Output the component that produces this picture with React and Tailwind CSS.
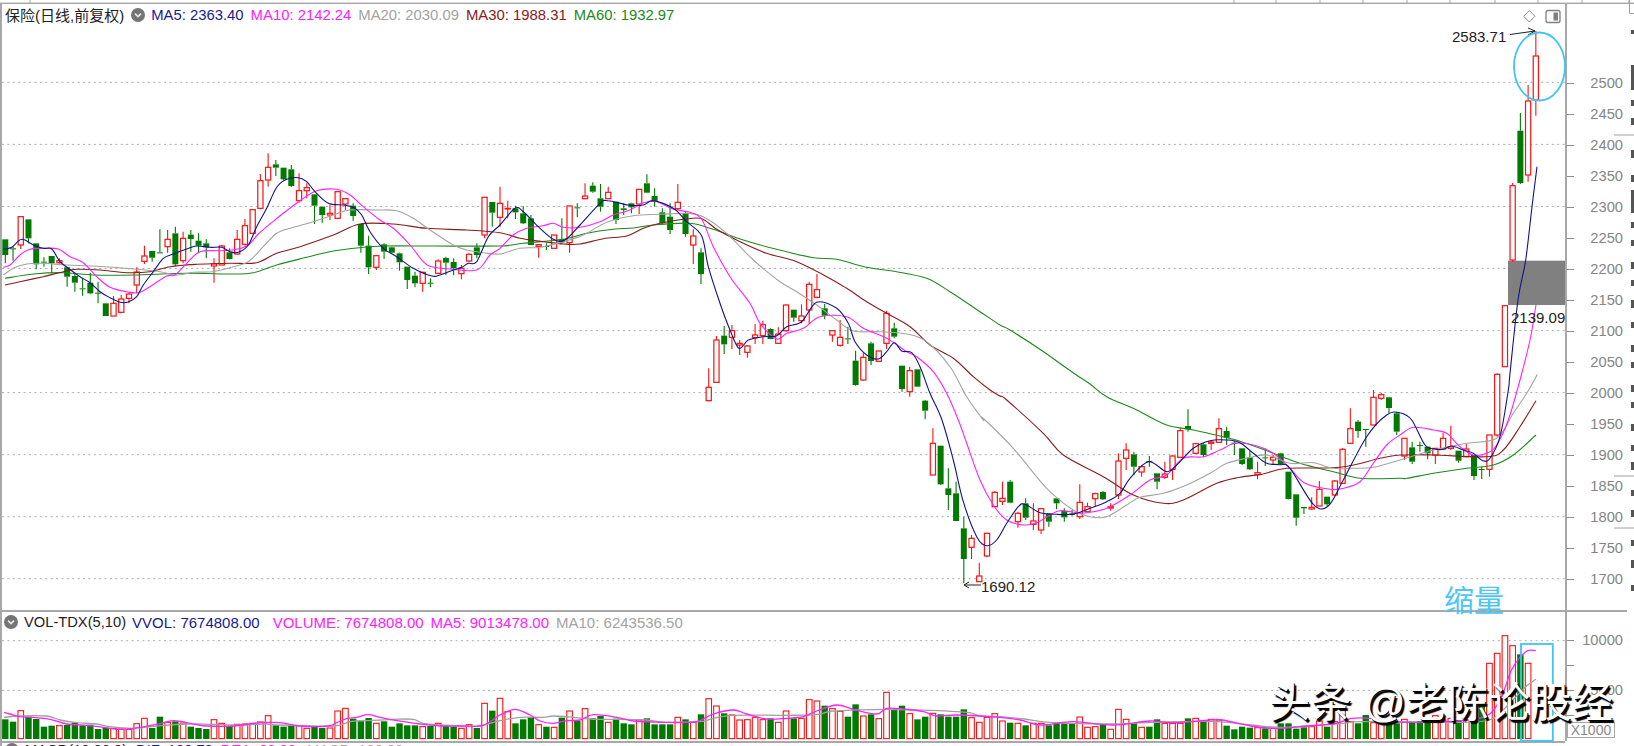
import React from 'react';

// K line rows: [colour, body top, body bottom, high, low], read off crops at 3x
const toReal = (oy, rows) => rows.map(([c, a, b, h, l]) => [c, oy + a / 3, oy + b / 3, oy + h / 3, oy + l / 3]);

const CANDLES = [
  ...toReal(150, [
    ['g',268,315,268,340],['g',295,297,290,332],['r',200,285,200,297],['g',208,265,208,280],['g',280,343,280,358],
    ['g',335,338,322,350],['g',318,340,318,370],['r',332,338,325,345],['g',352,380,352,410],['g',378,398,370,425],
    ['g',415,417,385,437],['g',398,430,368,433],['g',428,430,395,460],['g',460,498,460,498],['r',460,498,438,498],
    ['r',447,487,435,490],['r',432,445,430,460],['r',366,405,352,430],['r',318,334,287,342],['g',303,323,303,335],
    ['g',307,310,238,310],['r',268,290,240,308],['g',250,343,230,348],['r',265,332,245,340],['g',254,267,240,305],
    ['g',272,287,250,310],['g',280,292,268,325],['r',342,348,325,398],['r',288,345,285,345],['g',307,327,295,328],
    ['r',268,312,240,315],['r',227,283,207,287],['r',179,250,178,252],['r',92,175,72,178],['r',52,90,10,110],
    ['g',43,53,30,78],['g',53,88,53,90],['g',58,108,45,110],['r',122,152,70,158],['r',113,122,100,145],
    ['g',133,167,133,222],['g',170,195,170,218],['r',190,195,165,210],['r',125,205,123,207],['r',146,162,145,180],
    ['g',167,198,160,212],['g',222,287,222,308],['g',287,352,257,372],['r',317,352,315,360],['g',283,305,280,327],
    ['g',292,308,290,310],['g',310,337,308,362],['g',350,390,350,417],['g',377,400,365,412],['r',367,400,365,425],
    ['g',398,400,385,412],['r',333,370,328,372],['g',324,338,320,375],['g',336,355,325,376],['r',355,371,345,388],
    ['r',313,333,310,337],['g',292,315,280,325],['r',142,255,142,265],['g',156,188,156,230],['r',160,202,110,230],
  ]),
  ...toReal(160, [
    ['r',145,147,122,175],['g',145,157,137,177],['g',160,190,138,192],['g',175,255,165,255],['r',254,259,252,293],
    ['g',258,260,250,270],['r',225,265,225,265],['g',237,247,175,250],['r',138,248,138,278],['g',142,145,130,172],
    ['r',108,116,70,118],['g',77,95,67,98],['g',115,140,72,155],['r',97,116,80,118],['g',125,180,125,192],
    ['g',145,150,130,165],['g',130,142,128,160],['r',88,132,88,162],['g',70,98,43,100],['g',108,125,85,140],
    ['g',157,190,145,195],['g',170,210,130,222],['r',127,146,72,150],['g',160,222,155,230],['r',228,255,208,312],
    ['g',277,342,265,372],['r',682,722,625,724],['r',540,667,528,668],['g',527,553,498,582],['r',512,532,495,567],
    ['r',550,555,540,585],['r',558,577,555,593],['r',525,533,492,552],['r',494,527,482,552],['g',507,537,505,538],
    ['r',522,550,502,552],['r',435,512,433,515],['g',449,473,449,485],['r',468,482,433,490],['r',373,450,365,492],
    ['r',389,412,342,415],['g',445,467,432,478],['r',512,525,510,545],['r',532,556,480,560],['g',535,538,500,552],
    ['g',602,675,572,677],['r',592,660,580,662],['g',550,603,545,615],['r',573,604,572,605],['r',460,550,452,567],
    ['g',505,530,488,535],['g',617,687,617,695],['r',632,695,620,710],['g',628,680,628,680],['g',722,752,720,778],
  ]),
  ...toReal(380, [
    ['r',190,285,145,285],['g',197,313,197,315],['g',325,345,265,390],['g',340,423,305,423],['g',445,537,410,610],
    ['r',475,502,465,537],['r',588,605,548,605],['r',460,528,458,532],['r',337,380,333,382],['r',355,364,305,375],
    ['g',305,368,300,370],['r',400,425,395,443],['g',370,413,355,420],['r',423,433,370,450],['r',386,450,385,462],
    ['g',400,425,400,440],['g',355,370,355,388],['g',393,412,385,425],['g',400,405,390,407],['r',367,410,313,417],
    ['r',380,395,368,398],['r',341,356,338,380],['g',336,358,333,360],['r',380,384,370,392],['r',243,345,220,357],
    ['r',210,235,190,270],['g',223,260,215,285],['r',260,276,255,290],['g',243,245,228,260],['g',280,305,280,328],
    ['r',282,292,245,297],['r',228,268,226,300],['r',152,232,143,235],['g',138,148,88,155],['r',191,220,188,222],
    ['g',193,225,190,232],['r',186,190,183,210],['r',146,187,115,188],['g',153,173,140,195],['g',188,190,182,225],
    ['g',205,252,205,255],['g',232,268,214,270],['r',278,284,245,298],['g',232,235,205,258],['r',232,240,225,255],
    ['g',220,252,218,255],['g',275,357,275,358],['g',343,413,343,437],['g',381,385,381,402],['r',382,387,352,390],
    ['r',328,378,303,378],['g',350,373,350,378],['r',303,345,300,347],['r',208,310,205,312],['r',146,190,85,192],
    ['g',125,153,120,173],['g',147,149,147,200],['r',52,135,30,135],['r',44,55,38,60],['g',52,84,50,100],
    ['g',100,155,95,165],
  ]),
  ...toReal(340, [
    ['r',295,348,295,360],['g',322,365,305,372],['g',315,317,305,335],['g',320,340,320,358],['r',325,345,325,372],
    ['r',295,327,278,330],['r',320,325,257,330],['g',332,362,332,368],['r',327,350,312,352],['g',345,408,345,420],
    ['g',387,390,380,417],['r',285,388,285,410],['r',103,285,100,290],
  ]),
  ['r',305.7,366.7,305,367],['r',185.7,260,183,262],['g',130.7,183,113,184],['r',101,175,85,181.7],['r',56,100,30.7,115.7],
];

const candleX = (i) => 5.3 + 7.73 * i;

// volume bar tops in page pixels
const VOLUMES = [
  ...[358,365,332,350,357,380,377,377,375,368,376,374,387,383,385,387,388,371,355,384,350,367,364,369,380,384,387,359,370,378,373,372,370,366,347,376,380,376,377,385,380,384,384,333,325,356,362,354,370,364,380,370,376,376,380,378,370,378,380,385,374,384,310,332].map((v) => 600 + v / 3),
  ...[175,215,250,238,232,254,260,262,233,213,243,206,235,228,247,236,250,253,240,235,253,253,253,232,238,247,223,176,198,220,225,240,239,232,239,235,247,213,235,235,179,183,197,206,214,230,193,228,223,236,157,210,197,221,238,230,220,223,230,230,208,233,247,232,221].map((v) => 640 + v / 3),
  ...[303,308,310,316,310,310,316,308,310,310,291,322,320,312,328,268,298,310,322,320,298,310,310,310,295,295,305,298,300,317,328,320,323,323,325,325,310,310,326,322,320,303,320,305,265,305,310,285,308,305,310,310,298,305,303,308,287,300,295,300,300,305,248,130,100,47,77,103,130].map((v) => 620 + v / 3),
];

const seg = (ox, oy, pts, sx = 3, sy = 3) => {
  const out = [];
  for (let i = 0; i < pts.length; i += 2) out.push([ox + pts[i] / sx, oy + pts[i + 1] / sy]);
  return out;
};

// crops overlap, keep only points that move on to the right, then round the corners
const line = (...parts) => {
  const p = [];
  parts.flat().forEach((q) => {
    if (!p.length || q[0] > p[p.length - 1][0]) p.push(q);
  });
  let d = `M${p[0][0].toFixed(1)} ${p[0][1].toFixed(1)}`;
  for (let i = 0; i < p.length - 1; i++) {
    const a = p[i - 1] || p[i];
    const b = p[i];
    const c = p[i + 1];
    const e = p[i + 2] || c;
    const c1 = [b[0] + (c[0] - a[0]) / 6, b[1] + (c[1] - a[1]) / 6];
    const c2 = [c[0] - (e[0] - b[0]) / 6, c[1] - (e[1] - b[1]) / 6];
    d += `C${c1[0].toFixed(1)} ${c1[1].toFixed(1)} ${c2[0].toFixed(1)} ${c2[1].toFixed(1)} ${c[0].toFixed(1)} ${c[1].toFixed(1)}`;
  }
  return d;
};

const MA5 = line(
  seg(0, 150, [10,298,35,292,65,268,100,285,130,295,155,297,180,335,205,355,240,380,270,398,300,425,330,443,360,457,385,456,410,440,430,405,460,365,490,325,520,312,560,297,590,288,630,292,665,292,690,305,715,307,745,285,770,230,800,175,830,112,860,88,895,83,920,95,945,125,985,160,1030,165,1060,172,1085,195,1110,245,1150,295,1190,320,1240,355,1295,378,1320,375,1360,360,1385,352,1405,340,1430,335,1465,260,1500,225]),
  seg(500, 160, [0,195,45,145,70,155,115,200,160,238,195,240,240,195,300,130,325,122,385,135,430,135,460,122,520,145,560,185,605,228,625,320,660,430,690,510,717,565,745,540,790,530,830,527,860,500,905,485,950,427,1010,445,1045,490,1065,545,1100,585,1135,597,1160,575,1183,548,1205,573,1235,578,1260,620,1290,700,1325,778]),
  seg(900, 380, [115,90,160,240,190,365,230,470,260,497,290,480,320,430,355,380,375,373,420,398,470,403,520,402,570,385,620,365,660,340,690,295,745,245,800,275,830,255,880,205,930,182,980,180,1020,188,1060,220,1100,250,1140,254,1170,265,1240,373,1285,378,1330,300,1400,170,1460,105,1500,98]),
  seg(1300, 340, [335,240,375,315,405,327,430,328,455,318,490,330,520,340,548,362,570,355,600,290,625,150,630,100]),
  [[1518,300],[1525.7,260],[1532,206.7],[1537,166.7]],
);
const MA10 = line(
  seg(0, 150, [10,352,30,345,60,315,90,298,130,295,175,297,210,320,250,338,290,380,330,412,380,425,415,428,450,410,500,378,525,375,560,340,600,305,660,302,710,298,745,285,775,252,810,222,850,190,900,152,950,122,1010,118,1050,135,1090,170,1140,210,1180,235,1230,285,1270,335,1295,350,1350,357,1430,360,1470,315,1500,295]),
  seg(500, 160, [0,262,40,225,80,205,130,197,160,190,190,202,240,202,300,185,340,165,390,150,430,128,470,125,520,148,570,157,605,178,640,260,690,350,750,430,780,490,830,537,860,520,910,505,960,470,1040,470,1090,505,1160,535,1220,575,1250,590,1300,635,1340,700,1375,780]),
  seg(900, 380, [170,100,200,190,240,300,280,375,320,420,370,435,410,428,450,405,480,392,530,398,560,398,620,385,690,345,750,300,800,285,850,235,910,230,960,210,1005,190,1060,195,1120,220,1170,265,1215,310,1290,328,1330,325,1380,305,1420,250,1460,195,1500,165]),
  seg(1300, 340, [340,262,400,270,440,280,480,320,520,345,560,340,590,315,625,240,660,120,690,0]),
  [[1536,305]],
);
const MA20 = line(
  seg(0, 150, [10,375,40,355,80,342,130,340,200,345,280,348,340,352,410,358,480,365,530,375,580,367,640,365,700,350,745,335,790,290,830,250,880,232,940,215,1000,195,1050,180,1130,180,1190,182,1240,205,1290,240,1360,285,1400,300,1450,308,1500,312]),
  seg(500, 160, [0,282,60,265,120,262,190,245,250,225,320,187,400,167,480,163,560,160,610,170,680,220,760,300,840,365,890,395,950,435,1010,480,1060,513,1140,515,1220,522,1280,545,1350,620,1400,710,1450,780]),
  seg(900, 380, [250,115,340,205,440,325,520,390,570,410,620,410,680,375,720,352,790,340,860,315,930,280,980,250,1040,235,1100,225,1170,250,1240,248,1300,265,1360,265,1420,262,1500,240]),
  seg(1300, 340, [400,330,500,310,590,295,640,220,680,160,712,103]),
);
const MA30 = line(
  seg(0, 150, [15,405,60,395,130,380,190,365,230,358,300,360,380,368,450,365,510,350,590,343,690,340,770,338,830,310,900,290,1000,255,1080,222,1180,222,1280,235,1400,240,1500,248]),
  seg(500, 160, [60,235,130,245,190,252,240,252,310,236,380,228,430,205,480,190,550,178,605,176,650,208,720,245,800,280,890,305,980,350,1040,385,1100,425,1160,460,1230,500,1290,555,1360,595,1420,650,1470,690,1500,708]),
  seg(900, 380, [320,60,430,160,490,225,610,290,700,345,790,370,850,360,950,310,1020,292,1090,282,1160,265,1320,262,1440,235,1500,225]),
  seg(1300, 340, [400,345,560,350,610,330,660,260,708,182]),
);
const MA60 = line(
  seg(0, 150, [15,385,100,372,190,368,280,375,400,375,560,370,700,372,760,368,830,345,920,322,1000,303,1080,293,1150,288,1300,288,1500,288]),
  seg(500, 160, [70,250,190,238,260,220,340,208,400,204,460,195,570,190,640,208,730,240,830,268,940,293,1010,298,1100,322,1190,335,1280,355,1350,395,1440,455,1500,495]),
  [[1010,330],[1041,350],[1072,372],[1090,384]],
  seg(900, 380, [620,50,710,90,800,135,880,150,1000,178,1080,205,1200,250,1300,275,1380,295,1500,295]),
  seg(1300, 340, [320,415,400,400,500,385,580,375,640,345,708,285]),
);

const VOL_PINK = line(
  seg(0, 600, [12,337,30,342,60,350,100,352,150,358,200,372,260,376,310,382,360,388,400,385,470,373,520,362,570,370,620,378,700,378,780,368,840,368,900,378,985,378,1010,368,1040,356,1070,352,1105,344,1140,352,1190,362,1260,372,1320,378,1380,378,1440,378,1470,365,1500,345]),
  seg(500, 640, [45,208,90,225,120,243,160,250,200,242,240,240,280,224,350,232,400,243,460,246,520,247,590,245,640,222,700,210,740,222,800,237,860,235,910,230,950,213,1010,195,1060,208,1130,222,1160,205,1210,207,1270,215,1310,228,1370,225,1500,232]),
  seg(1000, 620, [50,300,100,315,180,305,280,315,370,303,430,308,520,300,550,300,620,318,680,325,760,318,830,310,870,295,920,295,960,305,1100,305,1200,290,1240,230,1265,150,1300,95,1325,92], 2.473),
);
const VOL_GREY = line(
  seg(0, 600, [12,352,60,348,140,348,180,360,230,368,290,372,330,380,400,385,470,378,560,372,640,373,720,375,800,372,840,375,1000,378,1050,365,1100,362,1180,358,1240,358,1280,372,1400,378,1440,378,1500,362]),
  seg(500, 640, [60,232,130,232,160,228,220,232,280,238,360,238,440,240,500,247,600,245,640,235,700,226,850,226,950,224,1000,213,1150,208,1250,210,1400,217,1440,228,1500,230]),
  seg(1000, 620, [60,297,130,308,280,312,400,306,540,305,620,315,700,322,830,312,900,305,1100,307,1210,300,1260,250,1300,200,1325,178], 2.473),
);

const GRID_PRICE = [82.3, 144.4, 206.5, 268.5, 330.6, 392.6, 454.7, 516.7, 578.7];
const PRICE_LABELS = ['2500','2450','2400','2350','2300','2250','2200','2150','2100','2050','2000','1950','1900','1850','1800','1750','1700'];
const RULER_TICKS = [30, 1234, 1276, 1320, 1363, 1407, 1450, 1495, 1538, 1582, 1629];
const EDGE_MARKS = [[30,4],[65,25],[100,6],[118,7],[150,8],[175,7],[190,23],[222,6],[240,6],[262,7],[280,6],[300,8],[322,6],[345,7],[362,6],[385,7],[402,6],[424,7],[445,6],[462,8],[490,6],[510,7],[540,6],[560,8],[585,6]];

const UP = '#ff1010';
const DOWN = '#007a00';

const Dropdown = () => (
  <svg width="14" height="14" viewBox="0 0 14 14" className="shrink-0">
    <circle cx="7" cy="7" r="7" fill="#757575" />
    <path d="M4 5.6 7 8.6 10 5.6" fill="none" stroke="#e8e8e8" strokeWidth="1.6" />
  </svg>
);

const Grid = ({ rows }) =>
  rows.map((y) => <line key={y} x1="2" x2="1565" y1={y} y2={y} stroke="#adadad" strokeWidth="1" strokeDasharray="2 3.4" />);

const Candle = ({ d, i }) => {
  const [c, top, bot, hi, lo] = d;
  const x = candleX(i);
  const col = c === 'r' ? UP : DOWN;
  return (
    <g>
      <line x1={x} x2={x} y1={hi} y2={top} stroke={col} strokeWidth="1.1" />
      <line x1={x} x2={x} y1={bot} y2={lo} stroke={col} strokeWidth="1.1" />
      {c === 'r' ? (
        <rect x={x - 2.6} y={top} width="5.2" height={bot - top} fill="#fff" stroke={col} strokeWidth="1.2" />
      ) : (
        <rect x={x - 3} y={top} width="6" height={Math.max(bot - top, 1)} fill={col} />
      )}
    </g>
  );
};

const VolumeBar = ({ top, i }) => {
  const x = candleX(i);
  const up = CANDLES[i] && CANDLES[i][0] === 'r';
  return up ? (
    <rect x={x - 2.8} y={top} width="5.6" height={738.6 - top} fill="#fff" stroke={UP} strokeWidth="1.1" />
  ) : (
    <rect x={x - 3.2} y={top} width="6.4" height={739 - top} fill={DOWN} />
  );
};

const Legend = ({ className, children }) => <span className={`whitespace-pre ${className}`}>{children}</span>;

const App = () => (
  <div className="relative w-[1634px] h-[746px] overflow-hidden bg-white flex flex-col text-[14.7px] leading-none font-['Liberation_Sans','Noto_Sans_CJK_SC',sans-serif]">
    {/* top ruler */}
    <svg width="1634" height="4" viewBox="0 0 1634 4" className="block shrink-0">
      <rect x="0" y="2.6" width="1634" height="1.4" fill="#a6a6a6" />
      {RULER_TICKS.map((x) => <line key={x} x1={x} x2={x} y1="0" y2="3" stroke="#a6a6a6" />)}
    </svg>

    {/* price pane */}
    <div className="flex h-[606px] shrink-0">
      <div className="relative w-[1565px] border-l-2 border-[#a8a8a8]">
        <svg width="1563" height="606" viewBox="2 4 1563 606" className="absolute inset-0">
          <Grid rows={GRID_PRICE} />
          <rect x="1508" y="260.7" width="57" height="44.3" fill="#808080" />
          {CANDLES.map((d, i) => <Candle key={i} d={d} i={i} />)}
          <path d={MA60} fill="none" stroke="#1c8a1c" strokeWidth="1.1" />
          <path d={MA30} fill="none" stroke="#8a1c1c" strokeWidth="1.1" />
          <path d={MA20} fill="none" stroke="#a3a3a3" strokeWidth="1.1" />
          <path d={MA10} fill="none" stroke="#ff20ff" strokeWidth="1.1" />
          <path d={MA5} fill="none" stroke="#12128c" strokeWidth="1.1" />
        </svg>
        <div className="relative flex items-center h-[22px] pl-[3px]">
          <span className="text-[15px] text-[#222222] whitespace-pre">保险(日线,前复权)</span>
          <span className="ml-[7px]"><Dropdown /></span>
          <div className="flex items-center gap-[7px] ml-[6px] text-[14.85px]">
            <Legend className="text-[#1a1a8c]">MA5: 2363.40</Legend>
            <Legend className="text-[#ff20ff]">MA10: 2142.24</Legend>
            <Legend className="text-[#a3a3a3]">MA20: 2030.09</Legend>
            <Legend className="text-[#8a2020]">MA30: 1988.31</Legend>
            <Legend className="text-[#1c8a1c]">MA60: 1932.97</Legend>
          </div>
        </div>
      </div>
      <div className="w-[69px] border-l-2 border-[#a8a8a8] pt-[63.6px]">
        {PRICE_LABELS.map((v) => (
          <div key={v} className="flex items-center h-[31.03px]">
            <span className="w-[7px] h-px bg-[#8c8c8c]" />
            <span className="ml-[1px] w-[48px] text-right text-[#858585]">{v}</span>
          </div>
        ))}
      </div>
    </div>

    <div className="h-[2px] w-[1627px] shrink-0 bg-[#a8a8a8]" />

    {/* volume pane */}
    <div className="flex h-[129px] shrink-0">
      <div className="relative w-[1565px] border-l-2 border-[#a8a8a8]">
        <svg width="1563" height="129" viewBox="2 612 1563 129" className="absolute inset-0">
          <Grid rows={[640.7, 690.4]} />
          {VOLUMES.map((top, i) => <VolumeBar key={i} top={top} i={i} />)}
          <path d={VOL_GREY} fill="none" stroke="#a0a0a0" strokeWidth="1.3" />
          <path d={VOL_PINK} fill="none" stroke="#ff20ff" strokeWidth="1.3" />
        </svg>
        <div className="relative flex items-center h-[20px] pl-[2px] text-[15px]">
          <Dropdown />
          <span className="ml-[6px] text-[14.7px] text-[#222222] whitespace-pre">VOL-TDX(5,10)</span>
          <Legend className="ml-[6px] text-[#1a1a8c]">VVOL: 7674808.00</Legend>
          <Legend className="ml-[13px] text-[#ff20ff]">VOLUME: 7674808.00</Legend>
          <Legend className="ml-[7px] text-[#ff20ff]">MA5: 9013478.00</Legend>
          <Legend className="ml-[7px] text-[#a3a3a3]">MA10: 6243536.50</Legend>
        </div>
      </div>
      <div className="w-[69px] border-l-2 border-[#a8a8a8] pt-[16.2px]">
        {['10000', '', '5000', ''].map((v, i) => (
          <div key={i} className="flex items-center h-[25px]">
            <span className="w-[7px] h-px bg-[#8c8c8c]" />
            <span className="ml-[1px] w-[48px] text-right text-[#858585]">{v}</span>
          </div>
        ))}
      </div>
    </div>

    <div className="h-[2px] w-[1565px] shrink-0 bg-[#a8a8a8]" />

    {/* next indicator, cut by the picture edge */}
    <div className="flex items-start h-[3px] pl-[3px] border-l-2 border-[#a8a8a8] leading-[15px]">
      <Dropdown />
      <span className="ml-[6px] text-[#222222] whitespace-pre">MACD(12,26,9)</span>
      <Legend className="ml-[9px] text-[#1a1a8c]">DIF: 100.70</Legend>
      <Legend className="ml-[8px] text-[#ff20ff]">DEA: 88.88</Legend>
      <Legend className="ml-[11px] text-[#a3a3a3]">MACD: 100.00</Legend>
    </div>

    {/* hand drawn marks and labels on top of the chart */}
    <svg width="1634" height="746" viewBox="0 0 1634 746" className="absolute inset-0 pointer-events-none">
      <path d="M1510 34.5 1535 31M1535 31 1528 28M1535 31 1528 35" fill="none" stroke="#222" strokeWidth="1" />
      <path d="M964 585H981M964 585l5-3M964 585l5 3" fill="none" stroke="#222" strokeWidth="1" />
      <ellipse cx="1539.5" cy="66.5" rx="25.5" ry="34" fill="none" stroke="#3ec4f5" strokeWidth="1.8" />
      <rect x="1521" y="644" width="31.8" height="96.8" fill="none" stroke="#3ec4f5" strokeWidth="1.8" />
      <path d="M1529.3 10.5 1535 16.3 1529.3 22 1523.6 16.3Z" fill="#fff" stroke="#8c8c8c" />
      <rect x="1546" y="10.5" width="14" height="12" rx="2" fill="#fff" stroke="#7f7f7f" strokeWidth="1.3" />
      <rect x="1553.5" y="12.5" width="4.5" height="8" fill="#7f7f7f" />
      <path d="M1629.5 0V13.5H1634M1614 135H1634M1614 476H1634M1614 528H1634" fill="none" stroke="#a0a0a0" />
      {EDGE_MARKS.map(([y, h]) => <rect key={y} x="1631" y={y} width="3" height={h} fill="#555555" />)}
    </svg>
    <span className="absolute left-[1452px] top-[29px] text-[15px] text-[#222222]">2583.71</span>
    <span className="absolute left-[1511px] top-[310px] w-[54px] overflow-hidden text-[15px] text-[#222222] whitespace-pre">2139.09</span>
    <span className="absolute left-[981px] top-[579px] text-[15px] text-[#222222]">1690.12</span>
    <span className="absolute left-[1444px] top-[585px] text-[30px] leading-[32px] text-[#4cc6f7]">缩量</span>
    <span className="absolute left-[1567px] top-[722px] w-[48px] h-[16px] flex items-center justify-center border border-[#a8a8a8] bg-white text-[#8a8a8a] text-[14px]">X1000</span>
    <span className="absolute left-[1269px] top-[680px] text-[41px] leading-[46px] tracking-[0.5px] whitespace-pre text-white [text-shadow:2.5px_2.5px_1px_#000,1px_1px_0_#000]">头条 @老陈论股经</span>
  </div>
);

export default App;
